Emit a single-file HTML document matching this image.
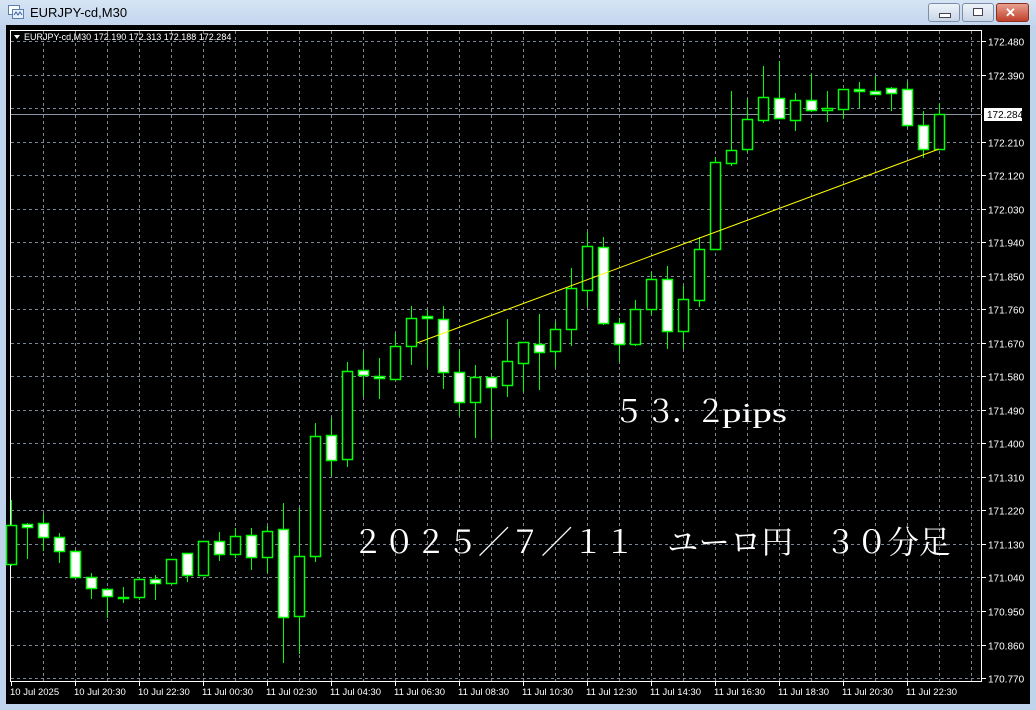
<!DOCTYPE html>
<html><head><meta charset="utf-8"><style>
body{margin:0;width:1036px;height:710px;overflow:hidden;background:#bfd4ec;font-family:"Liberation Sans",sans-serif;}
#title{position:absolute;left:0;top:0;width:1036px;height:25px;background:linear-gradient(#d6e4f4,#c3d6ee);}
#title span{position:absolute;left:30px;top:5px;font-size:13px;color:#000;}
#chart{position:absolute;left:6px;top:25px;width:1024px;height:679px;background:#000;}
.btn{position:absolute;top:3px;height:17px;border:1px solid #7b8ea8;border-radius:3px;background:linear-gradient(#eef3f9,#c9d6e6);}
</style></head><body>
<div id="title">
<svg style="position:absolute;left:8px;top:5px" width="16" height="14"><rect x="0.5" y="0.5" width="11" height="9" fill="#fff" stroke="#5a7fb0"/><rect x="4.5" y="4.5" width="11" height="9" fill="#e8f0fa" stroke="#5a7fb0"/><path d="M6 10l2-3 2 3 2-3 2 3" stroke="#3060a0" fill="none"/></svg>
<span>EURJPY-cd,M30</span>
<div class="btn" style="left:928px;width:30px"><div style="position:absolute;left:10px;top:9px;width:10px;height:3px;background:#fff;border:1px solid #445"></div></div>
<div class="btn" style="left:962px;width:30px"><div style="position:absolute;left:10px;top:4px;width:8px;height:6px;border:1px solid #445;background:#fff"></div></div>
<div class="btn" style="left:996px;width:31px;background:linear-gradient(#e8a090,#c0402c);border-color:#8a3020"><div style="position:absolute;left:8px;top:1px;color:#fff;font-weight:bold;font-size:13px">✕</div></div>
</div>
<div id="chart"></div>
<svg id="s" style="position:absolute;left:0;top:0" width="1036" height="710" xmlns="http://www.w3.org/2000/svg"></svg>
<script>
var s=document.getElementById('s'),h='';
for(var k=0;k<20;k++){var y=Math.round(41+k*33.53)+.5;h+='<line x1="11" y1="'+y+'" x2="982" y2="'+y+'" stroke="#7b8794" stroke-dasharray="3,3"/>';
 if(k!=2){var v=(172.48-0.09*k).toFixed(3);h+='<line x1="982" y1="'+y+'" x2="986" y2="'+y+'" stroke="#fff"/><text x="988" y="'+(y+4)+'" fill="#fff" font-size="10" font-family="Liberation Sans">'+v+'</text>';}}
for(var x=43;x<982;x+=32){h+='<line x1="'+(x+.5)+'" y1="31" x2="'+(x+.5)+'" y2="682" stroke="#7b8794" stroke-dasharray="3,3"/>';}
h+='<rect x="10.5" y="30.5" width="971" height="651" fill="none" stroke="#fff"/>';
var labs=["10 Jul 2025","10 Jul 20:30","10 Jul 22:30","11 Jul 00:30","11 Jul 02:30","11 Jul 04:30","11 Jul 06:30","11 Jul 08:30","11 Jul 10:30","11 Jul 12:30","11 Jul 14:30","11 Jul 16:30","11 Jul 18:30","11 Jul 20:30","11 Jul 22:30"];
for(var i=0;i<labs.length;i++){var x=11+64*i;h+='<line x1="'+(x+.5)+'" y1="682" x2="'+(x+.5)+'" y2="686" stroke="#fff"/><text x="'+(x-1)+'" y="695" fill="#fff" font-size="9.5" font-family="Liberation Sans">'+labs[i]+'</text>';}
h+='<line x1="11" y1="114.5" x2="982" y2="114.5" stroke="#8a96a4"/>';
var c=[[500,566,525,564,0],[523,559,524,527,1],[514,551,523,537,1],[533,563,537,551,1],[550,577,551,577,1],[573,599,577,588,1],[588,618,589,596,1],[587,603,597,597,1],[579,600,579,597,0],[575,600,579,583,1],[559,584,559,583,0],[553,582,553,575,1],[541,576,541,575,0],[532,561,541,554,1],[528,558,536,554,0],[528,570,535,557,1],[526,573,531,557,0],[503,663,529,617,1],[508,654,556,616,0],[423,562,436,556,0],[418,476,435,460,1],[362,467,371,459,0],[351,397,370,375,1],[358,399,376,378,1],[333,380,346,379,0],[306,365,318,346,0],[310,367,316,318,1],[306,389,319,372,1],[350,416,372,402,1],[365,438,377,402,0],[377,439,377,387,1],[319,397,361,385,0],[342,392,342,363,0],[314,390,344,352,1],[322,367,329,351,0],[268,346,288,329,0],[232,307,246,290,0],[237,325,247,323,1],[318,362,323,344,1],[300,346,309,344,0],[272,315,279,309,0],[266,349,279,331,1],[286,349,299,331,0],[237,307,249,300,0],[157,250,162,249,0],[91,166,150,163,0],[99,152,119,149,0],[66,123,97,120,0],[61,119,98,118,1],[93,131,100,120,0],[74,112,100,110,1],[91,122,108,110,0],[89,119,89,109,0],[82,108,89,91,1],[76,95,91,94,1],[87,111,88,93,1],[82,127,89,125,1],[111,158,125,149,1],[103,149,114,149,0]];
for(var i=0;i<c.length;i++){var x=11+16*i,d=c[i];
 h+='<line x1="'+(x+.5)+'" y1="'+d[0]+'" x2="'+(x+.5)+'" y2="'+d[1]+'" stroke="#00ff00"/>';
 var bh=Math.max(d[3]-d[2],1);
 h+='<rect x="'+(x-4.5)+'" y="'+(d[2]+.5)+'" width="10" height="'+bh+'" fill="'+(d[4]?'#fff':'#000')+'" stroke="#00ff00" stroke-width="1.5"/>';}
h+='<line x1="417" y1="343" x2="939" y2="149" stroke="#ffff00"/>';
h+='<rect x="984" y="108" width="38" height="13" fill="#fff"/><text x="987" y="118" font-size="10" fill="#000" font-family="Liberation Sans">172.284</text>';
h+='<path d="M14 35h6l-3 4z" fill="#fff"/><text x="24" y="40" fill="#fff" font-size="9" font-family="Liberation Sans">EURJPY-cd,M30  172.190 172.313 172.188 172.284</text>';
var F='font-family="Noto Serif CJK SC,Noto Serif CJK JP,serif" fill="#fff"';
h+='<text x="613" y="422" font-size="31" '+F+'>５</text>';
h+='<text x="645" y="422" font-size="31" '+F+'>３</text>';
h+='<text x="672" y="422" font-size="31" '+F+'>．</text>';
h+='<text x="695" y="422" font-size="31" '+F+'>２</text>';
h+='<text x="722" y="422" font-size="27" textLength="65" lengthAdjust="spacingAndGlyphs" font-family="Liberation Serif,serif" fill="#fff">pips</text>';
h+='<text x="352" y="553" font-size="31.5" '+F+'>２０２５／７／１１　ユーロ円　３０分足</text>';
s.innerHTML=h;
</script>
</body></html>
